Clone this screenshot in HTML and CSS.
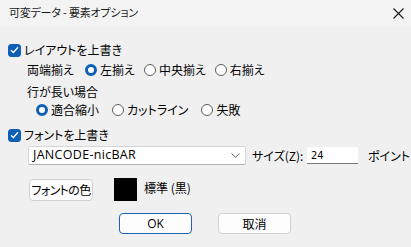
FILE: index.html
```html
<!DOCTYPE html>
<html lang="ja">
  <head>
    <meta charset="UTF-8">
    <title>可変データ - 要素オプション</title>
    <link rel="stylesheet" href="styles.css">
  </head>
  <body>
    <div class="dialog">
      <div class="titlebar">
        <span class="title">可変データ - 要素オプション</span>
        <svg class="close" width="11" height="11" viewBox="0 0 11 11">
          <path d="M0.5 0.5 L10.5 10.5 M10.5 0.5 L0.5 10.5" stroke="#1a1a1a" stroke-width="1.1" fill="none"/>
        </svg>
      </div>

      <div class="content">
        <label class="row check-row row-layout">
          <span class="checkbox checked">
            <svg width="9" height="8" viewBox="0 0 9 8"><path d="M1 4.2 L3.4 6.5 L8 1.3" stroke="#fff" stroke-width="1.3" fill="none"/></svg>
          </span>
          レイアウトを上書き
        </label>

        <div class="row row-align">
          <span class="label">両端揃え</span>
          <span class="radio-group">
            <span class="opt"><span class="radio checked"></span>左揃え</span>
            <span class="opt"><span class="radio"></span>中央揃え</span>
            <span class="opt"><span class="radio"></span>右揃え</span>
          </span>
        </div>

        <div class="row row-long-label">
          <span class="label">行が長い場合</span>
        </div>

        <div class="row row-long">
          <span class="opt"><span class="radio checked"></span>適合縮小</span>
          <span class="opt"><span class="radio"></span>カットライン</span>
          <span class="opt"><span class="radio"></span>失敗</span>
        </div>

        <label class="row check-row row-font">
          <span class="checkbox checked">
            <svg width="9" height="8" viewBox="0 0 9 8"><path d="M1 4.2 L3.4 6.5 L8 1.3" stroke="#fff" stroke-width="1.3" fill="none"/></svg>
          </span>
          フォントを上書き
        </label>

        <div class="row row-fontname">
          <div class="select">
            <span class="select-text">JANCODE-nicBAR</span>
            <svg width="9" height="5" viewBox="0 0 9 5"><path d="M0.5 0.5 L4.5 4.5 L8.5 0.5" stroke="#666" stroke-width="1" fill="none"/></svg>
          </div>
          <span class="size-label">サイズ(Z):</span>
          <div class="textbox">24</div>
          <span class="unit">ポイント</span>
        </div>

        <div class="row row-color">
          <button class="btn btn-color">フォントの色</button>
          <span class="swatch"></span>
          <span class="color-name">標準 (黒)</span>
        </div>

        <div class="row row-actions">
          <button class="btn btn-action btn-default">OK</button>
          <button class="btn btn-action">取消</button>
        </div>
      </div>
    </div>
  </body>
</html>
```

FILE: styles.css
```css
* {
  box-sizing: border-box;
}

body {
  margin: 0;
  width: 411px;
  height: 247px;
  overflow: hidden;
  background: #f0f0f0;
  color: #000;
  font-family: "Noto Sans CJK JP", "Noto Sans", sans-serif;
  font-size: 12px;
  line-height: 1;
  font-feature-settings: "palt";
}

.dialog {
  display: flex;
  flex-direction: column;
  height: 100%;
}

.titlebar {
  height: 27px;
  background: #f3f3f3;
  display: flex;
  align-items: center;
  justify-content: space-between;
  padding: 0 7px 3px 9px;
}

.title {
  font-size: 11px;
  color: #1a1a1a;
  letter-spacing: -0.2px;
}

.close {
  margin-top: 2px;
}

.content {
  display: flex;
  flex-direction: column;
}

.row {
  display: flex;
  align-items: center;
  white-space: nowrap;
}

.check-row {
  height: 14px;
  padding-left: 8px;
  gap: 3px;
}

.checkbox {
  width: 13px;
  height: 13px;
  border-radius: 3px;
  display: flex;
  align-items: center;
  justify-content: center;
  border: 1px solid #8a8a8a;
  background: #fff;
}

.checkbox.checked {
  background: #0f5fb5;
  border-color: #0f5fb5;
}

.row-layout {
  margin-top: 16px;
}

.row-align {
  margin-top: 5px;
  height: 16px;
  padding-left: 27px;
}

.row-align .label {
  width: 58px;
}

.radio-group {
  display: flex;
  gap: 9px;
}

.opt {
  display: flex;
  align-items: center;
  gap: 3px;
}

.radio {
  width: 12px;
  height: 12px;
  border-radius: 50%;
  border: 1px solid #5c5c5c;
  background: #fff;
}

.radio.checked {
  border: 3.5px solid #0f5fb5;
}

.row-long-label {
  margin-top: 6px;
  height: 16px;
  padding-left: 27px;
}

.row-long {
  margin-top: 2px;
  height: 16px;
  padding-left: 36px;
  gap: 13px;
}

.row-font {
  margin-top: 10px;
}

.row-fontname {
  margin-top: 4px;
  height: 19px;
  padding-left: 28px;
}

.select {
  width: 218px;
  height: 19px;
  background: #fff;
  border: 1px solid #d6d6d6;
  border-bottom-color: #b0b0b0;
  border-radius: 2px;
  display: flex;
  align-items: center;
  justify-content: space-between;
  padding: 0 5px 0 4px;
}

.select-text {
  font-family: "Open Sans", "Liberation Sans", sans-serif;
  font-size: 12.5px;
  letter-spacing: 0.3px;
}

.size-label {
  margin-left: 6px;
  width: 55px;
}

.textbox {
  width: 51px;
  height: 17px;
  background: #fff;
  border-bottom: 1px solid #7a7a7a;
  padding: 3px 0 0 4px;
  font-family: "DejaVu Sans Condensed", "Liberation Sans", sans-serif;
  font-size: 11px;
}

.unit {
  margin-left: 10px;
}

.btn {
  font-family: inherit;
  font-size: 12px;
  font-feature-settings: "palt";
  color: #000;
  background: #fdfdfd;
  border: 1px solid #d0d0d0;
  border-radius: 4px;
  padding: 0;
  line-height: 1;
  white-space: nowrap;
}

.row-color {
  margin-top: 13px;
  padding-left: 29px;
}

.btn-color {
  width: 64px;
  height: 22px;
  letter-spacing: -0.6px;
}

.swatch {
  width: 23px;
  height: 23px;
  background: #000;
  margin-left: 21px;
}

.color-name {
  margin-left: 7px;
  margin-bottom: 4px;
}

.row-actions {
  margin-top: 12px;
  padding-left: 119px;
  gap: 26px;
}

.btn-action {
  width: 73px;
  height: 21px;
}

.btn-default {
  border: 1.5px solid #1a64b4;
  font-family: "Open Sans", sans-serif;
}
```
